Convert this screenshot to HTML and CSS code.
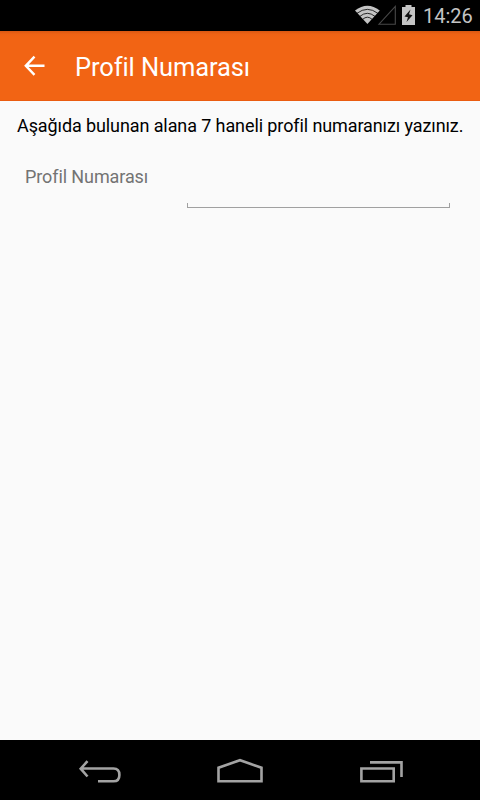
FILE: index.html
```
<!DOCTYPE html>
<html lang="tr">
<head>
    <meta charset="UTF-8">
    <meta name="viewport" content="width=device-width, initial-scale=1.0">
    <title>Profil Numarası</title>
    <link rel="stylesheet" href="styles.css">
</head>
<body>
    <div class="status-bar">
        <svg class="status-icons" width="64" height="31" viewBox="354 0 64 31">
            <path d="M367.4 24L355 10.500Q367.400 1 379.800 10.500Z" fill="#c4c4c4"/>
            <g fill="none" stroke="#000" stroke-width="0.8">
                <path d="M357 13.300Q367.400 5.400 377.800 13.300"/>
                <path d="M359.800 16.400Q367.400 10.200 375 16.400"/>
                <path d="M362.600 19.400Q367.400 15 372.200 19.400"/>
            </g>
            <path d="M379 24.200H395.300V6.500Z" fill="none" stroke="#484848" stroke-width="1.1"/>
            <path d="M405.500 5H411.500V7H415V25H402V7H405.500Z" fill="#c4c4c4"/>
            <path d="M410.500 9.500L404.500 16.500L408 17.300L406.500 22L412.500 15.200L409 14.300Z" fill="#111"/>
        </svg>
        <span class="clock">14:26</span>
    </div>

    <header class="app-bar">
        <svg class="back" width="22" height="22" viewBox="0 0 22 22">
            <path d="M20.500 10.800H2M10.500 1.700L1.800 10.800L10.500 19.900" fill="none" stroke="#fff" stroke-width="2.400"/>
        </svg>
        <h1>Profil Numarası</h1>
    </header>

    <main>
        <p class="info">Aşağıda bulunan alana 7 haneli profil numaranızı yazınız.</p>
        <div class="form-row">
            <label for="profileNumber">Profil Numarası</label>
            <div class="field">
                <input type="text" id="profileNumber" name="profileNumber" maxlength="7">
            </div>
        </div>
    </main>

    <nav class="nav-bar">
        <svg width="480" height="60" viewBox="0 740 480 60" fill="none" stroke="#a3a3a3" stroke-width="2.600">
            <path d="M98 781.300H113.500C117.500 781.300 119.400 778.500 119.400 774.900S117.500 768.500 113.500 768.500H81M87.500 761.200L80.700 768.700L87.500 776.500"/>
            <path d="M218.500 781.300V767.700L240 760.200L261.500 767.700V781.300Z"/>
            <path d="M361.400 768.500H393.700V781.300H361.400ZM370 762.400H401.500V777"/>
        </svg>
    </nav>
</body>
</html>
```
FILE: styles.css
```
* {
    box-sizing: border-box;
}

body {
    font-family: Roboto, sans-serif;
    margin: 0;
    height: 100vh;
    display: flex;
    flex-direction: column;
    overflow: hidden;
    background-color: #fafafa;
}

.status-bar {
    height: 31px;
    padding-right: 7px;
    display: flex;
    justify-content: flex-end;
    align-items: center;
    background-color: #000;
    color: #c4c4c4;
}

.clock {
    width: 50px;
    margin-left: 5px;
    font-size: 20px;
    line-height: 24px;
    white-space: nowrap;
}

.app-bar {
    height: 70px;
    padding-left: 24px;
    display: flex;
    align-items: center;
    background: linear-gradient(#d95712, #ef6214 3px, #f26414 6px);
    border-bottom: 1px solid #ea5c10;
    color: #fff;
}

.back {
    margin-right: 28px;
}

h1 {
    margin: 2px 0 0 1px;
    font-size: 25.5px;
    line-height: 32px;
    font-weight: 400;
    letter-spacing: -0.1px;
}

main {
    flex: 1;
    padding: 13px 16px;
}

.info {
    margin: 0 0 0 1px;
    font-size: 18px;
    line-height: 24px;
    letter-spacing: -0.1px;
    white-space: nowrap;
    color: #000;
}

.form-row {
    display: flex;
    padding: 26px 14px 0 8px;
}

label {
    width: 163px;
    padding: 1px 0 0 1px;
    font-size: 18px;
    line-height: 24px;
    letter-spacing: -0.1px;
    color: #737373;
}

.field {
    flex: 1;
    height: 44px;
    border: solid #a0a0a0;
    border-width: 0 1px 1px;
    border-image: linear-gradient(transparent 39px, #a0a0a0 39px) 1;
}

input {
    width: 100%;
    height: 40px;
    padding: 0 8px;
    border: none;
    outline: none;
    background: transparent;
    font: 18px Roboto, sans-serif;
}

.nav-bar {
    height: 60px;
    background-color: #000;
}
```
